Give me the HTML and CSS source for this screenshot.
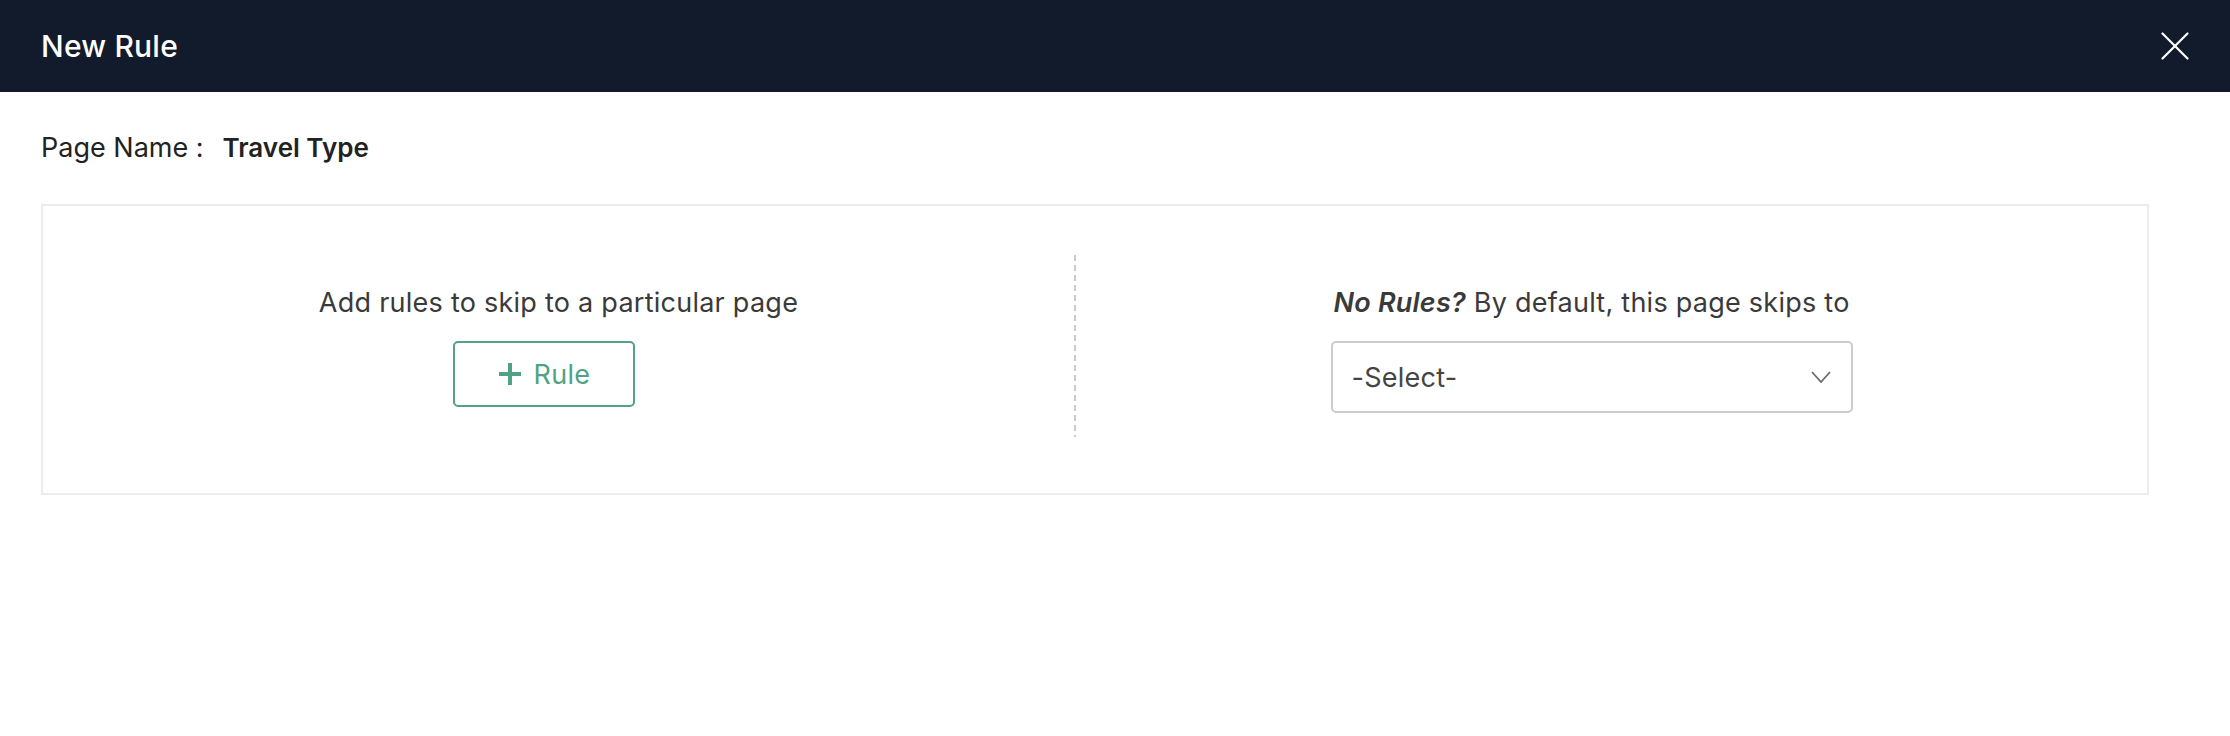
FILE: index.html
```html
<!DOCTYPE html>
<html lang="en">
<head>
<meta charset="utf-8">
<title>New Rule</title>
<link rel="stylesheet" href="styles.css">
</head>
<body>
  <header class="modal-header">
    <h1 class="modal-title">New Rule</h1>
    <button class="close-btn" aria-label="Close">
      <svg width="28" height="28" viewBox="0 0 28 28" fill="none" stroke="#ffffff" stroke-width="2.2" stroke-linecap="round">
        <line x1="1.5" y1="1.5" x2="26.5" y2="26.5"/>
        <line x1="26.5" y1="1.5" x2="1.5" y2="26.5"/>
      </svg>
    </button>
  </header>
  <main class="modal-body">
    <div class="page-name">
      <span class="page-label">Page Name :</span>
      <span class="page-value">Travel Type</span>
    </div>
    <section class="rule-card">
      <div class="rule-col">
        <p class="rule-text">Add rules to skip to a particular page</p>
        <button class="add-rule-btn">
          <svg class="plus" width="22" height="22" viewBox="0 0 22 22">
            <rect x="9" y="0" width="4" height="22" fill="#4fa384"/>
            <rect x="0" y="9" width="22" height="4" fill="#4fa384"/>
          </svg>
          <span>Rule</span>
        </button>
      </div>
      <div class="divider"></div>
      <div class="rule-col">
        <p class="rule-text"><em class="strong-em">No Rules?</em> By default, this page skips to</p>
        <div class="select-box">
          <span class="select-value">-Select-</span>
          <svg width="20" height="12" viewBox="0 0 20 12" fill="none" stroke="#6b6b6b" stroke-width="1.8">
            <polyline points="1,1 10,11 19,1"/>
          </svg>
        </div>
      </div>
    </section>
  </main>
</body>
</html>
```

FILE: styles.css
```css
* {
  box-sizing: border-box;
}

body {
  margin: 0;
  background: #ffffff;
  font-family: Inter, "Noto Sans", "Liberation Sans", sans-serif;
  color: #333333;
}

.modal-header {
  height: 92px;
  background: #121b2b;
  display: flex;
  align-items: center;
  justify-content: space-between;
  padding: 0 41px;
}

.modal-title {
  margin: 0;
  font-size: 30px;
  font-weight: 500;
  color: #ffffff;
  line-height: 40px;
  letter-spacing: 0.2px;
}

.close-btn {
  background: none;
  border: 0;
  padding: 0;
  width: 28px;
  height: 28px;
  display: flex;
  cursor: pointer;
}

.modal-body {
  padding: 38px 81px 0 41px;
}

.page-name {
  font-size: 27px;
  line-height: 36px;
  color: #222222;
  display: flex;
}

.page-value {
  font-weight: 600;
  font-size: 26px;
  margin-left: 19px;
}

.rule-card {
  margin-top: 38px;
  border: 2px solid #ececec;
  background: #ffffff;
  padding: 49px 40px 56px 0;
  display: grid;
  grid-template-columns: 1fr 2px 1fr;
}

.divider {
  height: 182px;
  background-image: linear-gradient(to bottom, #cccccc 0 6px, transparent 6px 10px);
  background-size: 2px 10px;
  background-repeat: repeat-y;
}

.rule-col {
  padding-top: 30px;
  display: flex;
  flex-direction: column;
  align-items: center;
}

.rule-text {
  margin: 0;
  font-size: 27px;
  line-height: 36px;
  color: #3a3a3a;
  letter-spacing: 0.25px;
}

.strong-em {
  font-weight: 600;
  font-style: italic;
}

.add-rule-btn {
  margin-top: 20px;
  margin-right: 30px;
  width: 182px;
  height: 66px;
  border: 2px solid #52a386;
  border-radius: 5px;
  background: #ffffff;
  display: flex;
  align-items: center;
  justify-content: center;
  gap: 13px;
  font-family: inherit;
  font-size: 27px;
  letter-spacing: 0.3px;
  color: #4fa384;
  padding: 0 0 0 2px;
}

.select-box {
  margin-top: 20px;
  width: 522px;
  height: 72px;
  border: 2px solid #cccccc;
  border-radius: 5px;
  background: #ffffff;
  display: flex;
  align-items: center;
  justify-content: space-between;
  padding: 0 20px 0 19px;
}

.select-value {
  font-size: 27px;
  letter-spacing: 0.25px;
  color: #444444;
}
```
